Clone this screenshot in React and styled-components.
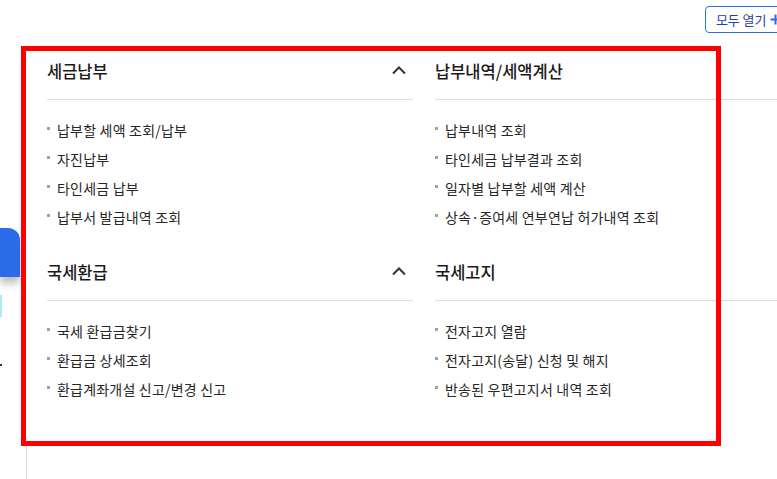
import React from "react";
import styled, { createGlobalStyle } from "styled-components";

const Global = createGlobalStyle`
  html, body { margin: 0; padding: 0; overflow: hidden; background: #fff; }
  body { font-family: "Noto Sans CJK KR", "Noto Sans", sans-serif; color: #333; }
  * { box-sizing: border-box; }
`;

const Page = styled.div`
  position: relative;
  display: flex;
  width: 840px;
  height: 479px;
`;

const Sidebar = styled.div`
  width: 27px;
  flex: none;
  display: flex;
  flex-direction: column;
  padding-top: 228px;
`;

const BlueTab = styled.div`
  width: 20px;
  height: 49px;
  background: #2a6bea;
  border-top-right-radius: 12px;
  box-shadow: 0 6px 8px rgba(0, 0, 0, 0.28);
`;

const Mark = styled.div`
  width: 2px;
  height: 22px;
  margin-top: 18px;
  background: #aee9f7;
`;

const Dot = styled.div`
  width: 2px;
  height: 2px;
  margin-top: 47px;
  background: #333;
`;

const Rail = styled.div`
  flex: 1;
  margin-top: 80px;
  border-right: 1px solid #dcdcf6;
`;

const Main = styled.div`
  flex: 1;
  padding-left: 20px;
  display: flex;
  flex-direction: column;
`;

const TopBar = styled.div`
  display: flex;
  justify-content: flex-start;
  padding: 6px 0 0 658px;
`;

const OpenAll = styled.button`
  height: 27px;
  display: inline-flex;
  align-items: center;
  gap: 4px;
  padding: 0 12px 0 10px;
  border: 1px solid #2f6fe6;
  border-radius: 4px;
  background: #fff;
  font-family: inherit;
  font-size: 13px;
  letter-spacing: -0.1px;
  color: #2b3ea6;
  cursor: pointer;
  white-space: nowrap;
`;

const Grid = styled.div`
  margin-top: 23px;
  display: grid;
  grid-template-columns: 366px 366px;
  column-gap: 22px;
  row-gap: 26px;
`;

const Section = styled.section`
  display: flex;
  flex-direction: column;
`;

const Header = styled.div`
  display: flex;
  align-items: center;
  justify-content: space-between;
  height: 44px;
  padding-bottom: 14px;
  border-bottom: 1px solid #dddddd;
`;

const Title = styled.h3`
  margin: 0;
  font-size: 16.5px;
  line-height: 30px;
  font-weight: 500;
  color: #1a1a1a;
`;

const Toggle = styled.span`
  display: inline-flex;
  margin-right: 6px;
  margin-top: -2px;
`;

const List = styled.ul`
  list-style: none;
  margin: 0;
  padding: 15px 0 0;
`;

const Item = styled.li`
  display: flex;
  align-items: center;
  gap: 7px;
  height: 29px;
  font-size: 14px;
  letter-spacing: 0.2px;
  color: #262626;
  &::before {
    content: "";
    width: 3px;
    height: 3px;
    margin-top: -2px;
    background: #a0a0a0;
    flex: none;
  }
`;

const Highlight = styled.div`
  position: absolute;
  left: 21px;
  top: 46px;
  width: 700px;
  height: 400px;
  border: 5px solid #ff0000;
  pointer-events: none;
`;

const Chevron = () => (
  <svg width="16" height="10" viewBox="0 0 16 10" fill="none">
    <path d="M2 8.5 L8 2.5 L14 8.5" stroke="#333" strokeWidth="2" />
  </svg>
);

const Plus = () => (
  <svg width="11" height="11" viewBox="0 0 11 11">
    <path d="M5.5 0.5 V10.5 M0.5 5.5 H10.5" stroke="#2a6de8" strokeWidth="2" />
  </svg>
);

const sections = [
  {
    title: "세금납부",
    toggle: true,
    items: ["납부할 세액 조회/납부", "자진납부", "타인세금 납부", "납부서 발급내역 조회"],
  },
  {
    title: "납부내역/세액계산",
    toggle: true,
    items: ["납부내역 조회", "타인세금 납부결과 조회", "일자별 납부할 세액 계산", "상속·증여세 연부연납 허가내역 조회"],
  },
  {
    title: "국세환급",
    toggle: true,
    items: ["국세 환급금찾기", "환급금 상세조회", "환급계좌개설 신고/변경 신고"],
  },
  {
    title: "국세고지",
    toggle: true,
    items: ["전자고지 열람", "전자고지(송달) 신청 및 해지", "반송된 우편고지서 내역 조회"],
  },
];

export default function App() {
  return (
    <>
      <Global />
      <Page>
        <Sidebar>
          <BlueTab />
          <Mark />
          <Dot />
          <Rail />
        </Sidebar>
        <Main>
          <TopBar>
            <OpenAll>
              모두 열기 <Plus />
            </OpenAll>
          </TopBar>
          <Grid>
            {sections.map((s) => (
              <Section key={s.title}>
                <Header>
                  <Title>{s.title}</Title>
                  {s.toggle && (
                    <Toggle>
                      <Chevron />
                    </Toggle>
                  )}
                </Header>
                <List>
                  {s.items.map((it) => (
                    <Item key={it}>{it}</Item>
                  ))}
                </List>
              </Section>
            ))}
          </Grid>
        </Main>
        <Highlight />
      </Page>
    </>
  );
}
